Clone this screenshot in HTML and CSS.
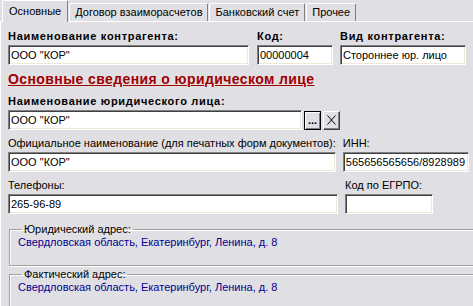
FILE: index.html
```html
<!DOCTYPE html>
<html lang="ru">
<head>
  <meta charset="UTF-8" />
  <title>Контрагент</title>
  <link rel="stylesheet" href="styles.css">
</head>
<body>

  <div class="tabs">
    <div class="tab active">Основные</div>
    <div class="tab">Договор взаиморасчетов</div>
    <div class="tab">Банковский счет</div>
    <div class="tab">Прочее</div>
  </div>

  <div class="panel">
    <div class="row first">
      <div class="field w-name">
        <span class="cap bold">Наименование контрагента:</span>
        <input type="text" value="ООО &quot;КОР&quot;" readonly />
      </div>
      <div class="field w-code">
        <span class="cap bold">Код:</span>
        <input type="text" value="00000004" readonly />
      </div>
      <div class="field w-kind">
        <span class="cap bold">Вид контрагента:</span>
        <input type="text" value="Стороннее юр. лицо" readonly />
      </div>
    </div>

    <h2 class="section">Основные сведения о юридическом лице</h2>

    <div class="row">
      <div class="field">
        <span class="cap bold">Наименование юридического лица:</span>
        <div class="picker">
          <input type="text" class="w-legal" value="ООО &quot;КОР&quot;" readonly />
          <button class="btn default">...</button>
          <button class="btn">
            <svg width="9" height="10" viewBox="0 0 9 10"><path d="M0.5 0.5 L8.5 9.5 M8.5 0.5 L0.5 9.5" stroke="#000" stroke-width="1" fill="none"/></svg>
          </button>
        </div>
      </div>
    </div>

    <div class="row">
      <div class="field w-wide">
        <span class="cap">Официальное наименование (для печатных форм документов):</span>
        <input type="text" value="ООО &quot;КОР&quot;" readonly />
      </div>
      <div class="field w-kind">
        <span class="cap">ИНН:</span>
        <input type="text" value="565656565656/8928989" readonly />
      </div>
    </div>

    <div class="row">
      <div class="field w-wide">
        <span class="cap">Телефоны:</span>
        <input type="text" value="265-96-89" readonly />
      </div>
      <div class="field w-egrpo">
        <span class="cap">Код по ЕГРПО:</span>
        <input type="text" value="" readonly />
      </div>
    </div>

    <fieldset class="group">
      <legend>Юридический адрес:</legend>
      <div class="addr">Свердловская область, Екатеринбург, Ленина, д. 8</div>
    </fieldset>

    <fieldset class="group second">
      <legend>Фактический адрес:</legend>
      <div class="addr">Свердловская область, Екатеринбург, Ленина, д. 8</div>
    </fieldset>
  </div>

</body>
</html>
```

FILE: styles.css
```css
body {
  margin: 0;
  width: 473px;
  height: 306px;
  overflow: hidden;
  background: #e0dfe3;
  color: #000;
  font-family: "Liberation Sans", Arial, sans-serif;
  font-size: 11px;
}

/* tab strip */
.tabs {
  position: relative;
  z-index: 1;
  display: flex;
  align-items: flex-end;
  height: 21px;
  padding-left: 2px;
}

.tab {
  height: 18px;
  line-height: 17px;
  padding: 0 5px;
  margin-right: 1px;
  border: 1px solid;
  border-bottom: none;
  border-color: #fff #808080 transparent #fff;
  border-radius: 2px 2px 0 0;
  box-sizing: border-box;
}

.tab.active {
  height: 22px;
  line-height: 21px;
  padding: 0 6px;
  margin-bottom: -1px;
  background: #e0dfe3;
}

/* page */
.panel {
  border-top: 1px solid #fff;
  border-left: 1px solid #fff;
  padding: 0 0 0 7px;
  height: 290px;
}

.row {
  display: flex;
  margin-top: 7px;
}

.row.first {
  margin-top: 8px;
}

.field {
  display: flex;
  flex-direction: column;
  margin-right: 7px;
}

.cap {
  line-height: 13px;
  margin-bottom: 2px;
  white-space: nowrap;
}

.bold {
  font-weight: bold;
  letter-spacing: 0.7px;
}

.w-name { width: 246px; margin-right: 8px; }
.w-code { width: 76px; }
.w-kind { width: 126px; }
.w-wide { width: 330px; }
.w-egrpo { width: 88px; }
.w-legal { width: 294px; }

input {
  height: 20px;
  box-sizing: border-box;
  margin: 0;
  padding: 0 0 0 2px;
  font: inherit;
  color: #000;
  background: #fff;
  border: 1px solid;
  border-color: #808080 #fff #fff #808080;
  box-shadow: inset 1px 1px #404040, inset -1px -1px #ece9d8;
  outline: none;
}

.section {
  margin: 6px 0 0;
  font-size: 14px;
  line-height: 17px;
  letter-spacing: 0.4px;
  color: #a00000;
  text-decoration: underline;
}

.picker {
  display: flex;
  align-items: center;
}

.btn {
  display: flex;
  align-items: center;
  justify-content: center;
  width: 17px;
  height: 19px;
  margin-left: 2px;
  padding: 0;
  box-sizing: border-box;
  font: inherit;
  line-height: 15px;
  color: #000;
  background: #e0dfe3;
  border: 1px solid;
  border-color: #fff #404040 #404040 #fff;
  box-shadow: inset -1px -1px #808080;
}

.btn.default {
  border-color: #000;
  box-shadow: inset 1px 1px #fff, inset -1px -1px #808080;
  font-weight: bold;
  line-height: 13px;
}

/* address groups */
.group {
  margin: 9px -20px 0 1px;
  padding: 0 0 16px 8px;
  border: 1px solid #a0a0a0;
  box-shadow: inset 1px 1px #fff, 1px 1px #fff;
}

.group.second {
  margin-top: 2px;
}

.group legend {
  padding: 0 2px;
  margin-left: 4px;
  line-height: 13px;
}

.addr {
  line-height: 13px;
  color: #000090;
}
```
